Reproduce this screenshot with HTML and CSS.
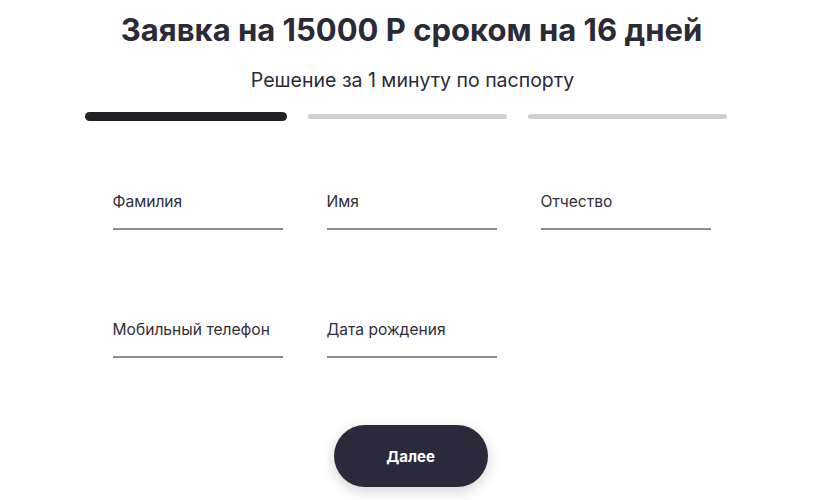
FILE: index.html
```html
<!DOCTYPE html>
<html lang="ru">
<head>
<meta charset="utf-8">
<link rel="stylesheet" href="styles.css">
</head>
<body>
<main class="page">
  <h1 class="title">Заявка на 15000 Р сроком на 16 дней</h1>
  <p class="subtitle">Решение за 1 минуту по паспорту</p>
  <div class="steps">
    <span class="step step-active"></span>
    <span class="step"></span>
    <span class="step"></span>
  </div>
  <form class="form">
    <div class="fields">
      <div class="row">
        <label class="field"><span class="label">Фамилия</span><span class="line"></span></label>
        <label class="field"><span class="label">Имя</span><span class="line"></span></label>
        <label class="field"><span class="label">Отчество</span><span class="line"></span></label>
      </div>
      <div class="row">
        <label class="field"><span class="label">Мобильный телефон</span><span class="line"></span></label>
        <label class="field"><span class="label">Дата рождения</span><span class="line"></span></label>
        <div class="field field-empty"></div>
      </div>
    </div>
    <div class="actions">
      <button type="button" class="btn">Далее</button>
    </div>
  </form>
</main>
</body>
</html>
```

FILE: styles.css
```css
* { box-sizing: border-box; }
html, body { margin: 0; padding: 0; background: #fff; }
body {
  font-family: "Inter", "Noto Sans", sans-serif;
  color: #2b2a37;
  width: 825px;
  height: 500px;
  overflow: hidden;
}
.page {
  display: flex;
  flex-direction: column;
  align-items: center;
  padding-top: 10px;
}
.title {
  margin: 0;
  font-size: 31px;
  font-weight: 700;
  line-height: 40px;
  color: #2b2a37;
  padding-right: 2px;
}
.subtitle {
  margin: 18px 0 0;
  font-size: 19.5px;
  line-height: 24px;
  color: #2b2a37;
}
.steps {
  display: flex;
  align-items: center;
  gap: 21px;
  margin-top: 20px;
  margin-right: 13px;
}
.step {
  display: block;
  width: 199px;
  height: 5px;
  border-radius: 3px;
  background: #d0d0d0;
}
.step-active {
  width: 202px;
  height: 9px;
  border-radius: 5px;
  background: #222226;
}
.form {
  display: flex;
  flex-direction: column;
  align-items: center;
  margin-top: 71px;
}
.fields {
  display: flex;
  flex-direction: column;
  gap: 90px;
  margin-right: 2px;
}
.row {
  display: flex;
  gap: 44px;
}
.field {
  display: flex;
  flex-direction: column;
  width: 170px;
}
.label {
  font-size: 15.6px;
  line-height: 20px;
  color: #2f2e3a;
  height: 20px;
}
.line {
  display: block;
  margin-top: 16px;
  height: 2px;
  background: #8c8c8c;
}
.actions {
  display: flex;
  justify-content: center;
  margin-top: 67px;
  margin-right: 4px;
}
.btn {
  width: 154px;
  height: 62px;
  border: none;
  border-radius: 31px;
  background: #2b2a3b;
  color: #fff;
  font-family: inherit;
  font-size: 15px;
  font-weight: 700;
  box-shadow: 0 4px 14px rgba(0, 0, 0, 0.18);
  cursor: pointer;
}
```
